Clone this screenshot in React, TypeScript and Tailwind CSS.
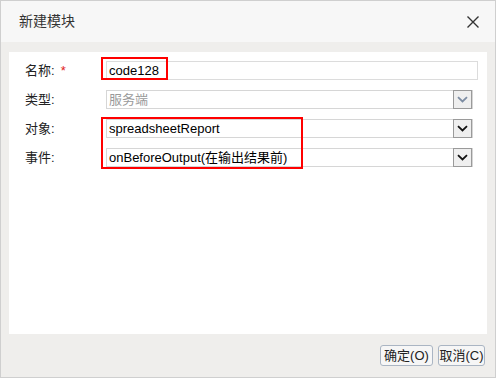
import React from "react";

const font = { fontFamily: '"Liberation Sans", "Noto Sans CJK SC", sans-serif' };

function Chevron({ disabled }: { disabled?: boolean }) {
  return (
    <svg width="11" height="7" viewBox="0 0 11 7">
      <path
        d="M1 1.2 L5.5 5.5 L10 1.2"
        fill="none"
        stroke={disabled ? "#7d8da3" : "#111"}
        strokeWidth="1.8"
      />
    </svg>
  );
}

function SelectBox({ value, disabled }: { value: string; disabled?: boolean }) {
  return (
    <div className="flex h-[19px] w-[367px] items-center border border-[#d6d6d6] bg-white">
      <span
        className={`flex-1 pl-[2px] text-[13px] leading-none ${
          disabled ? "text-[#9a9a9a]" : "text-black"
        }`}
      >
        {value}
      </span>
      <div className="flex h-[19px] w-[19px] items-center justify-center border border-[#9a9a9a] bg-[#efefef]">
        <Chevron disabled={disabled} />
      </div>
    </div>
  );
}

function Label({ text, required }: { text: string; required?: boolean }) {
  return (
    <div className="w-[81px] text-[13px] text-[#222]">
      {text}
      {required && <span className="ml-[6px] text-[#e02020]">*</span>}
    </div>
  );
}

export default function App() {
  return (
    <div
      className="flex h-[378px] w-[496px] flex-col border border-[#cfcfcf] bg-[#efeeec]"
      style={font}
    >
      {/* header */}
      <div className="flex h-[41px] items-center justify-between bg-[#f7f7f7] pl-[18px] pr-[16px]">
        <span className="text-[14px] text-[#333]">新建模块</span>
        <svg width="12" height="12" viewBox="0 0 12 12">
          <path d="M0.5 0.5 L11.5 11.5 M11.5 0.5 L0.5 11.5" stroke="#333" strokeWidth="1.4" />
        </svg>
      </div>

      {/* body */}
      <div className="px-[8px] pt-[10px]">
        <div className="relative h-[282px] bg-white pl-[16px] pt-[4px]">
          <div className="flex h-[29px] items-center">
            <Label text="名称:" required />
            <div className="flex h-[19px] w-[372px] items-center border border-[#dcdcdc] pl-[2px] text-[13px] text-black">
              code128
            </div>
          </div>
          <div className="flex h-[29px] items-center">
            <Label text="类型:" />
            <SelectBox value="服务端" disabled />
          </div>
          <div className="flex h-[29px] items-center">
            <Label text="对象:" />
            <SelectBox value="spreadsheetReport" />
          </div>
          <div className="flex h-[29px] items-center">
            <Label text="事件:" />
            <SelectBox value="onBeforeOutput(在输出结果前)" />
          </div>

          {/* annotation boxes */}
          <div className="absolute left-[92px] top-[5px] h-[23px] w-[67px] border-2 border-[#ff0000]" />
          <div className="absolute left-[92px] top-[65px] h-[52px] w-[202px] border-2 border-[#ff0000]" />
        </div>
      </div>

      {/* footer */}
      <div className="flex justify-end gap-[5px] pr-[10px] pt-[11px]">
        <button className="h-[21px] w-[53px] rounded-[3px] border border-[#aab5c3] bg-[#f6f6f6] text-[13px] leading-none text-[#222]">
          确定(O)
        </button>
        <button className="h-[21px] w-[47px] rounded-[3px] border border-[#aab5c3] bg-[#f6f6f6] text-[13px] leading-none text-[#222]">
          取消(C)
        </button>
      </div>
    </div>
  );
}
